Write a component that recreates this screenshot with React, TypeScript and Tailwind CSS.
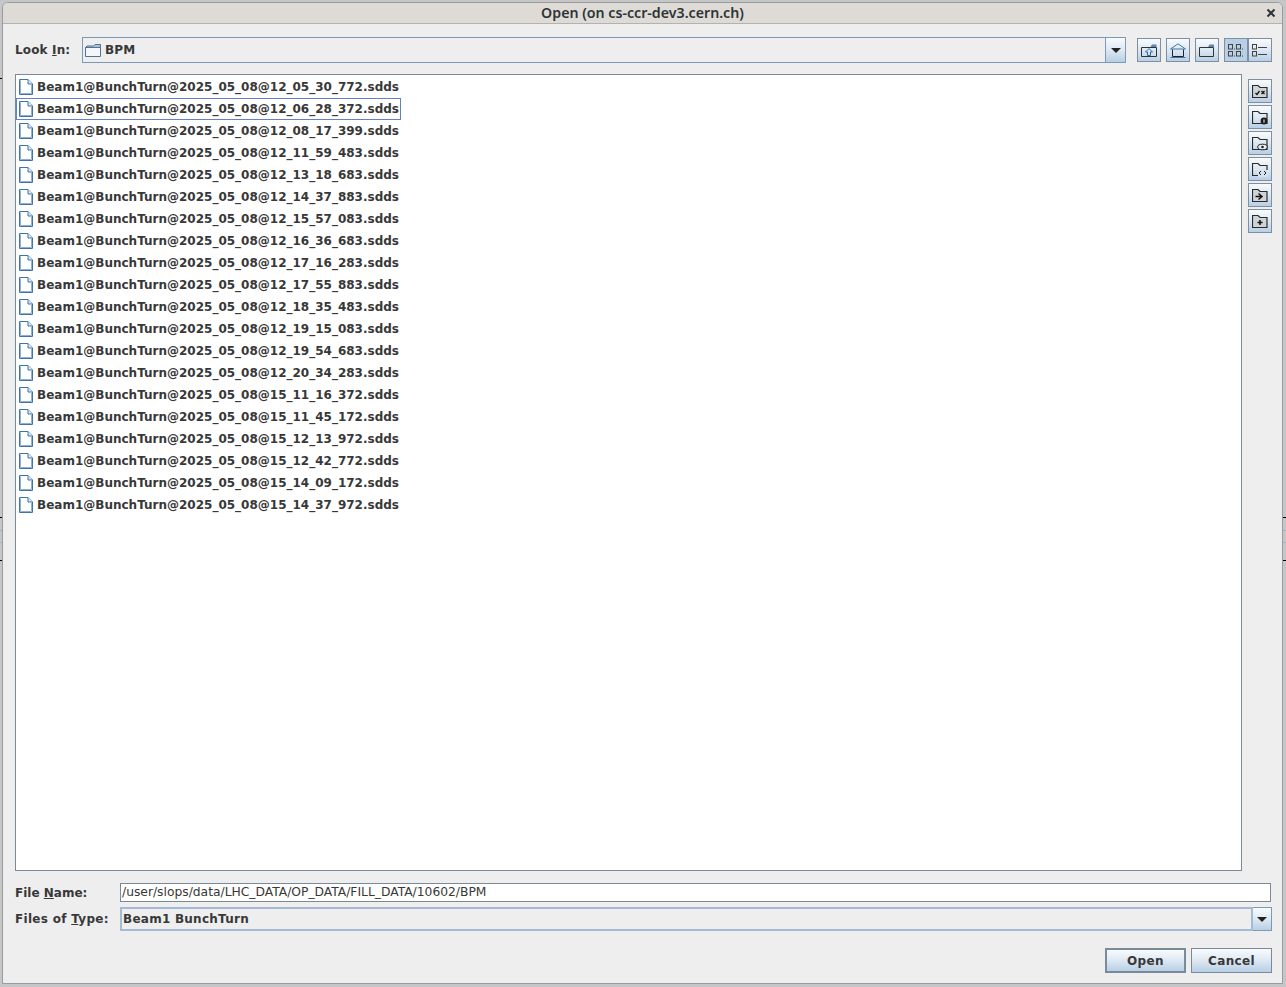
const files = [
  'Beam1@BunchTurn@2025_05_08@12_05_30_772.sdds',
  'Beam1@BunchTurn@2025_05_08@12_06_28_372.sdds',
  'Beam1@BunchTurn@2025_05_08@12_08_17_399.sdds',
  'Beam1@BunchTurn@2025_05_08@12_11_59_483.sdds',
  'Beam1@BunchTurn@2025_05_08@12_13_18_683.sdds',
  'Beam1@BunchTurn@2025_05_08@12_14_37_883.sdds',
  'Beam1@BunchTurn@2025_05_08@12_15_57_083.sdds',
  'Beam1@BunchTurn@2025_05_08@12_16_36_683.sdds',
  'Beam1@BunchTurn@2025_05_08@12_17_16_283.sdds',
  'Beam1@BunchTurn@2025_05_08@12_17_55_883.sdds',
  'Beam1@BunchTurn@2025_05_08@12_18_35_483.sdds',
  'Beam1@BunchTurn@2025_05_08@12_19_15_083.sdds',
  'Beam1@BunchTurn@2025_05_08@12_19_54_683.sdds',
  'Beam1@BunchTurn@2025_05_08@12_20_34_283.sdds',
  'Beam1@BunchTurn@2025_05_08@15_11_16_372.sdds',
  'Beam1@BunchTurn@2025_05_08@15_11_45_172.sdds',
  'Beam1@BunchTurn@2025_05_08@15_12_13_972.sdds',
  'Beam1@BunchTurn@2025_05_08@15_12_42_772.sdds',
  'Beam1@BunchTurn@2025_05_08@15_14_09_172.sdds',
  'Beam1@BunchTurn@2025_05_08@15_14_37_972.sdds',
];

const gradient = 'bg-gradient-to-b from-[#f8fbfd] via-[#dde8f3] to-[#b8cfe5]';

function FileIcon() {
  return (
    <svg width="14" height="16" viewBox="0 0 14 16" className="shrink-0">
      <path d="M.5 .5H9L13.5 5V15.5H.5Z" fill="#fff" stroke="#3f74ab" />
      <path d="M1.5 1.5V14.5H12.5V6" fill="none" stroke="#8fb0d2" />
      <path d="M9 .5V5H13.5" fill="#dce7f2" stroke="#3f74ab" />
    </svg>
  );
}

function FolderIcon() {
  return (
    <svg width="16" height="13" viewBox="0 0 16 13" className="shrink-0">
      <path d="M.5 3.5H15.5V12.5H.5Z" fill="#f4f7fa" stroke="#54728f" />
      <path d="M.5 3.5L2 2H8.5L10 .5H15.5V3.5Z" fill="#a9c3dd" stroke="#54728f" />
    </svg>
  );
}

function Arrow() {
  return (
    <svg width="10" height="5" viewBox="0 0 10 5">
      <path d="M0 0H10L5 5Z" fill="#222" />
    </svg>
  );
}

function ToolButton({ children, active }: { children: React.ReactNode; active?: boolean }) {
  return (
    <div
      className={`flex h-[24px] w-[24px] items-center justify-center border border-[#7d8fa3] ${
        active ? 'bg-[#b8cfe5]' : gradient
      }`}
    >
      {children}
    </div>
  );
}

function UpIcon() {
  return (
    <svg width="16" height="13" viewBox="0 0 16 13">
      <path d="M.5 3.5H15.5V12.5H.5Z" fill="none" stroke="#333" />
      <path d="M9.5 3L11 .5H15.5V3Z" fill="#5f86b3" />
      <path d="M8 4.5L11.5 8H9.5V11.5H6.5V8H4.5Z" fill="none" stroke="#2c6aa8" />
    </svg>
  );
}

function HomeIcon() {
  return (
    <svg width="16" height="15" viewBox="0 0 16 15">
      <path d="M.5 6L8 .8L15.5 6Z" fill="none" stroke="#3f77ad" />
      <path d="M2.5 6.5V13.5H13.5V6.5" fill="none" stroke="#222" />
      <path d="M.5 14.5H15.5" stroke="#3f77ad" />
    </svg>
  );
}

function NewFolderIcon() {
  return (
    <svg width="16" height="13" viewBox="0 0 16 13">
      <path d="M.5 3.5H14.5V12.5H.5Z" fill="none" stroke="#333" />
      <path d="M9 3L10.5 .5H15V3Z" fill="#5f86b3" />
    </svg>
  );
}

function ListIcon() {
  const cell = (x: number, y: number) => (
    <g key={`${x}-${y}`}>
      <rect x={x + 0.5} y={y + 0.5} width="4" height="4.5" fill="none" stroke="#444" />
      <path d={`M${x + 6} ${y + 5}h1`} stroke="#444" />
    </g>
  );
  return (
    <svg width="16" height="14" viewBox="0 0 16 14">
      {cell(0, 1)}
      {cell(8, 1)}
      {cell(0, 8)}
      {cell(8, 8)}
    </svg>
  );
}

function DetailsIcon() {
  return (
    <svg width="16" height="14" viewBox="0 0 16 14">
      <rect x=".5" y="1.5" width="4" height="4.5" fill="none" stroke="#444" />
      <path d="M6 4.5H15" stroke="#444" />
      <rect x=".5" y="8.5" width="4" height="4.5" fill="none" stroke="#444" />
      <path d="M6 11.5H15" stroke="#444" />
    </svg>
  );
}

// folder outline used by the side buttons, badge goes in children
function SideFolder({ children, filled }: { children?: React.ReactNode; filled?: boolean }) {
  return (
    <svg width="16" height="15" viewBox="0 0 16 15">
      <path
        d="M.5 13.5V1.5H6L8 3.5H15V13.5Z"
        fill={filled ? '#cfd4d9' : 'none'}
        stroke="#2b2b2b"
        strokeWidth="1.2"
      />
      {children}
    </svg>
  );
}

function App() {
  return (
    <div
      className="relative flex h-[987px] w-[1286px] flex-col bg-[#c4c6c8] pt-[2px] pr-[3px] pb-[3px] pl-[2px] text-[12px] text-[#383838]"
      style={{ fontFamily: '"DejaVu Sans", sans-serif' }}
    >
      {/* bits of the window behind the dialog */}
      <div className="absolute top-[78px] left-0 h-[1px] w-[4px] bg-black" />
      <div className="absolute top-[517px] left-0 h-[1px] w-full bg-black" />
      <div className="absolute top-[560px] left-0 h-[1px] w-full bg-black" />
      <div className="absolute top-[530px] left-0 h-[1px] w-full bg-[#9fb2c8]" />
      <div className="absolute top-[542px] left-0 h-[1px] w-full bg-[#9fb2c8]" />

      <div className="relative flex min-h-0 flex-1 flex-col overflow-hidden rounded-t-[6px] border border-[#9b9b9b] bg-[#eeeeee]">
        <div className="relative flex h-[21px] shrink-0 items-center justify-center border-b border-[#b5b2ad] bg-[#dedbd6] text-[#2e3436]">
          <span
            className="text-[14.2px] font-semibold"
            style={{ fontFamily: '"Noto Sans", sans-serif' }}
          >
            Open (on cs-ccr-dev3.cern.ch)
          </span>
          <svg width="10" height="10" viewBox="0 0 10 10" className="absolute top-[5px] right-[6px]">
            <path d="M1.5 1.5L8.5 8.5M8.5 1.5L1.5 8.5" stroke="#2e3436" strokeWidth="2" />
          </svg>
        </div>

        <div className="flex min-h-0 flex-1 flex-col pt-[13px] pr-[10px] pb-[10px] pl-[12px]">
          <div className="flex h-[26px] shrink-0 items-center">
            <span className="w-[67px] font-bold tracking-[0.15px]">
              Look <span className="underline">I</span>n:
            </span>
            <div className="flex h-[26px] flex-1 items-center border border-[#7e99b8] bg-[#eeeeee] pl-[2px]">
              <FolderIcon />
              <span className="ml-[4px] font-bold tracking-[0.2px]">BPM</span>
            </div>
            <div className={`flex h-[26px] w-[20px] items-center justify-center border border-l-0 border-[#7e99b8] ${gradient}`}>
              <Arrow />
            </div>
            <div className="ml-[11px] flex items-center gap-[5px]">
              <ToolButton><UpIcon /></ToolButton>
              <ToolButton><HomeIcon /></ToolButton>
              <ToolButton><NewFolderIcon /></ToolButton>
              <div className="flex">
                <ToolButton active><ListIcon /></ToolButton>
                <ToolButton><DetailsIcon /></ToolButton>
              </div>
            </div>
          </div>

          <div className="mt-[11px] flex min-h-0 flex-1">
            <div className="flex flex-1 flex-col border border-[#7a8a99] bg-white pt-[1px]">
              {files.map((f, i) => (
                <div
                  key={f}
                  className={`flex h-[22px] w-[385px] items-center gap-[4px] font-bold ${
                    i === 1 ? 'border border-[#6382bf] pl-[2px]' : 'pl-[3px]'
                  }`}
                >
                  <FileIcon />
                  <span className="whitespace-nowrap">{f}</span>
                </div>
              ))}
            </div>
            <div className="mt-[5px] ml-[6px] flex w-[24px] flex-col gap-[2px]">
              <ToolButton>
                <SideFolder filled>
                  <path d="M3.5 9l1.5 1.5L7.5 7M9.5 7l3 3M12.5 7l-3 3" fill="none" stroke="#111" strokeWidth="1.3" />
                </SideFolder>
              </ToolButton>
              <ToolButton>
                <SideFolder>
                  <circle cx="12" cy="11" r="3.4" fill="#1c1c1c" />
                  <path d="M12 9.5v3.2" stroke="#fff" />
                </SideFolder>
              </ToolButton>
              <ToolButton>
                <SideFolder>
                  <ellipse cx="10.5" cy="11" rx="4.8" ry="2.8" fill="#e6eef6" stroke="#222" />
                  <circle cx="10.5" cy="11" r="1.3" fill="#222" />
                </SideFolder>
              </ToolButton>
              <ToolButton>
                <SideFolder>
                  <rect x="6" y="8" width="10" height="7" fill="#d6e3ef" />
                  <path d="M9 9L7 11L9 13M12 9L14 11L12 13" fill="none" stroke="#222" />
                </SideFolder>
              </ToolButton>
              <ToolButton>
                <SideFolder filled>
                  <path d="M3.5 8.5H9M6.5 5.5L10 8.5L6.5 11.5" fill="none" stroke="#111" strokeWidth="1.5" />
                </SideFolder>
              </ToolButton>
              <ToolButton>
                <SideFolder filled>
                  <path d="M8 6v5M5.5 8.5h5" stroke="#111" strokeWidth="1.5" />
                </SideFolder>
              </ToolButton>
            </div>
          </div>

          <div className="mt-[12px] flex h-[19px] shrink-0 items-center">
            <span className="w-[105px] font-bold">
              File <span className="underline">N</span>ame:
            </span>
            <div className="mr-[1px] flex h-[19px] flex-1 items-center border border-[#7a8a99] bg-white pl-[1px] text-[12.3px]">
              /user/slops/data/LHC_DATA/OP_DATA/FILL_DATA/10602/BPM
            </div>
          </div>

          <div className="mt-[5px] flex h-[24px] shrink-0 items-center">
            <span className="w-[105px] font-bold tracking-[0.3px]">
              Files of <span className="underline">T</span>ype:
            </span>
            <div className="flex h-[24px] flex-1 items-center border-2 border-[#a3bbd3] bg-[#eeeeee] pl-[1px] font-bold tracking-[0.25px]">
              Beam1 BunchTurn
            </div>
            <div className={`flex h-[24px] w-[19px] items-center justify-center border border-l-0 border-[#7e99b8] ${gradient}`}>
              <Arrow />
            </div>
          </div>

          <div className="mt-[17px] flex shrink-0 justify-end gap-[5px]">
            <button className={`h-[25px] w-[81px] border-2 border-[#7a8a99] font-bold tracking-[0.35px] ${gradient}`}>Open</button>
            <button className={`h-[25px] w-[81px] border border-[#7a8a99] font-bold tracking-[0.35px] ${gradient}`}>Cancel</button>
          </div>
        </div>
      </div>
    </div>
  );
}

export default App;
